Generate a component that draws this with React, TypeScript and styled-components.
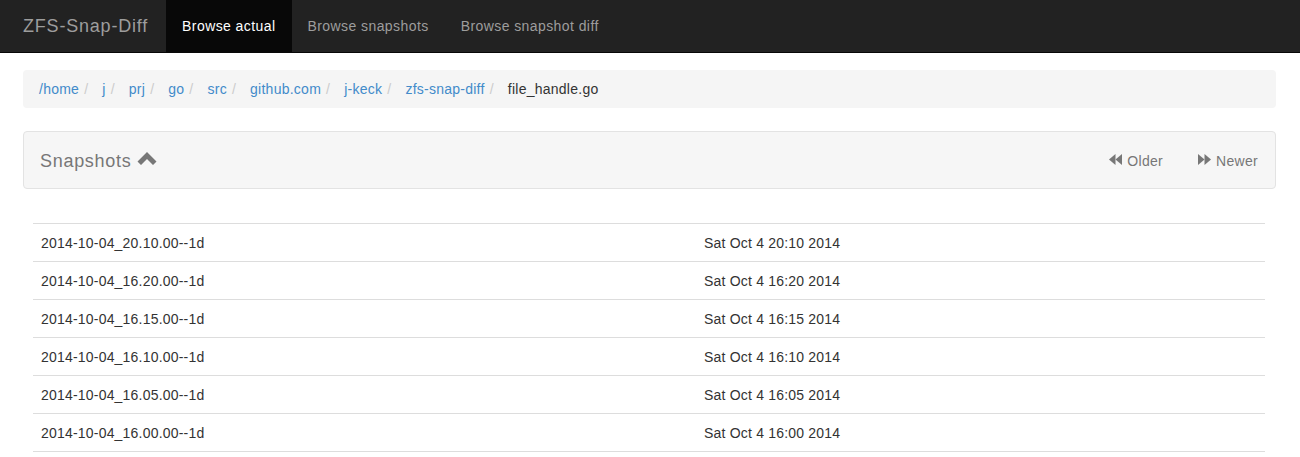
import React from "react";
import styled, { createGlobalStyle } from "styled-components";

const GlobalStyle = createGlobalStyle`
  body {
    margin: 0;
    font-family: "Liberation Sans", Arial, sans-serif;
    font-size: 14px;
    line-height: 20px;
    color: #333;
    background: #fff;
  }
`;

const crumbs = ["/home", "j", "prj", "go", "src", "github.com", "j-keck", "zfs-snap-diff"];

const snapshots = [
  { name: "2014-10-04_20.10.00--1d", date: "Sat Oct 4 20:10 2014" },
  { name: "2014-10-04_16.20.00--1d", date: "Sat Oct 4 16:20 2014" },
  { name: "2014-10-04_16.15.00--1d", date: "Sat Oct 4 16:15 2014" },
  { name: "2014-10-04_16.10.00--1d", date: "Sat Oct 4 16:10 2014" },
  { name: "2014-10-04_16.05.00--1d", date: "Sat Oct 4 16:05 2014" },
  { name: "2014-10-04_16.00.00--1d", date: "Sat Oct 4 16:00 2014" },
];

const ChevronUp = () => (
  <svg width="20" height="15" viewBox="0 0 20 15">
    <polygon points="10,1 19.5,10.5 16,14 10,8 4,14 0.5,10.5" fill="currentColor" />
  </svg>
);

const Backward = () => (
  <svg width="13" height="11" viewBox="0 0 13 11">
    <polygon points="0,5.5 6.5,0 6.5,11" fill="currentColor" />
    <polygon points="6.5,5.5 13,0 13,11" fill="currentColor" />
  </svg>
);

const Forward = () => (
  <svg width="13" height="11" viewBox="0 0 13 11">
    <polygon points="0,0 6.5,5.5 0,11" fill="currentColor" />
    <polygon points="6.5,0 13,5.5 6.5,11" fill="currentColor" />
  </svg>
);

const App = () => {
  return (
    <>
      <GlobalStyle />
      <Navbar>
        <Brand>ZFS-Snap-Diff</Brand>
        <NavLink $active>Browse actual</NavLink>
        <NavLink>Browse snapshots</NavLink>
        <NavLink>Browse snapshot diff</NavLink>
      </Navbar>
      <Content>
        <Breadcrumb>
          {crumbs.map((c) => (
            <React.Fragment key={c}>
              <Crumb>{c}</Crumb>
              <Sep>/</Sep>
            </React.Fragment>
          ))}
          <Current>file_handle.go</Current>
        </Breadcrumb>

        <SnapBar>
          <SnapTitle>
            Snapshots
            <ChevronUp />
          </SnapTitle>
          <Pager>
            <PagerLink>
              <Backward />
              Older
            </PagerLink>
            <PagerLink>
              <Forward />
              Newer
            </PagerLink>
          </Pager>
        </SnapBar>

        <SnapList>
          {snapshots.map((s) => (
            <Row key={s.name}>
              <Cell>{s.name}</Cell>
              <Cell>{s.date}</Cell>
            </Row>
          ))}
        </SnapList>
      </Content>
    </>
  );
};

const Navbar = styled.nav`
  display: flex;
  align-items: stretch;
  height: 52px;
  background-color: #222;
  border-bottom: 1px solid #080808;
  padding-left: 8px;
`;

const Brand = styled.a`
  padding: 16px 18px 16px 15px;
  font-size: 18px;
  line-height: 20px;
  letter-spacing: 0.8px;
  color: #9d9d9d;
`;

const NavLink = styled.a<{ $active?: boolean }>`
  padding: 16px 16px;
  line-height: 20px;
  letter-spacing: 0.42px;
  color: ${(p) => (p.$active ? "#fff" : "#9d9d9d")};
  background-color: ${(p) => (p.$active ? "#080808" : "transparent")};
`;

const Content = styled.main`
  padding: 17px 24px 0 23px;
`;

const Breadcrumb = styled.div`
  display: flex;
  align-items: center;
  padding: 9px 16px;
  background-color: #f5f5f5;
  border-radius: 4px;
  letter-spacing: 0.25px;
`;

const Crumb = styled.a`
  color: #428bca;
  cursor: pointer;
`;

const Sep = styled.span`
  color: #ccc;
  padding: 0 14px 0 5px;
`;

const Current = styled.span`
  color: #333;
`;

const SnapBar = styled.div`
  margin-top: 23px;
  height: 56px;
  display: flex;
  align-items: center;
  justify-content: space-between;
  background-color: #f6f6f6;
  border: 1px solid #e3e3e3;
  border-radius: 4px;
  padding: 0 17px 0 16px;
`;

const SnapTitle = styled.div`
  display: flex;
  align-items: center;
  gap: 6px;
  font-size: 18px;
  letter-spacing: 0.7px;
  color: #777;
  padding-top: 2px;

  svg {
    margin-top: -6px;
  }
`;

const Pager = styled.div`
  display: flex;
  gap: 35px;
`;

const PagerLink = styled.a`
  display: flex;
  align-items: center;
  gap: 5px;
  color: #777;
  letter-spacing: 0.3px;
  cursor: pointer;
  padding-top: 2px;

  svg {
    margin-top: -4px;
  }
`;

const SnapList = styled.div`
  margin: 34px 11px 0 10px;
  border-bottom: 1px solid #ddd;
`;

const Row = styled.div`
  display: grid;
  grid-template-columns: 663px 1fr;
  border-top: 1px solid #ddd;
`;

const Cell = styled.div`
  padding: 9px 8px 7px;
  line-height: 21px;
  letter-spacing: 0.2px;
`;

export default App;
